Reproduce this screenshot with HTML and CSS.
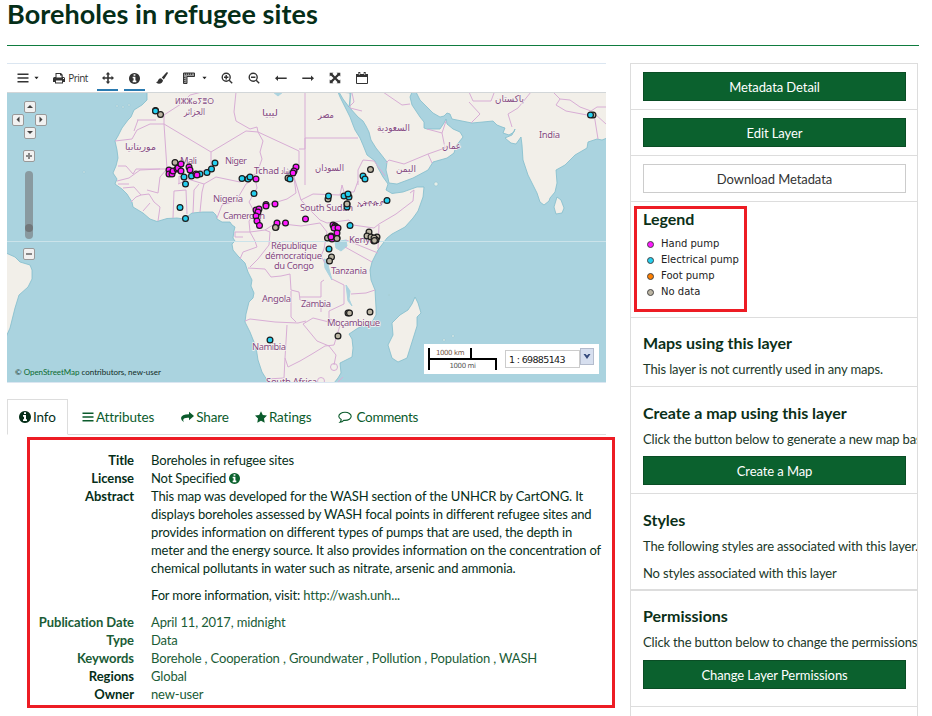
FILE: index.html
```html
<!DOCTYPE html>
<html lang="en">
<head>
<meta charset="utf-8">
<title>Boreholes in refugee sites</title>
<link rel="stylesheet" href="styles.css">
</head>
<body>
<svg width="0" height="0" class="sprite" aria-hidden="true">
  <symbol id="i-info" viewBox="0 128 1536 1536"><path d="M1024 1376v-160q0-14-9-23t-23-9h-96v-512q0-14-9-23t-23-9h-320q-14 0-23 9t-9 23v160q0 14 9 23t23 9h96v320h-96q-14 0-23 9t-9 23v160q0 14 9 23t23 9h448q14 0 23-9t9-23zm-128-896v-160q0-14-9-23t-23-9h-192q-14 0-23 9t-9 23v160q0 14 9 23t23 9h192q14 0 23-9t9-23zm640 416q0 209-103 385.500t-279.500 279.500-385.500 103-385.500-103-279.500-279.500-103-385.500 103-385.500 279.500-279.500 385.500-103 385.500 103 279.500 279.500 103 385.500z"/></symbol>
  <symbol id="i-bars" viewBox="0 0 12 12"><path d="M.5 1.500h11v1.600H.5zM.5 5.200h11v1.600H.5zM.5 8.900h11v1.600H.5z"/></symbol>
  <symbol id="i-caret" viewBox="0 0 6 4"><path d="M.5.500h5L3 3.500z"/></symbol>
</svg>
<h2 class="page-title">Boreholes in refugee sites</h2>
<div class="columns">
  <main class="main">
    <section class="viewer">
      <div class="toolbar">
        <span class="tool wide"><svg class="ic"><use href="#i-bars"/></svg><svg class="caret"><use href="#i-caret"/></svg></span>
        <span class="tool print"><svg class="ic" viewBox="0 0 12 12"><path fill-rule="evenodd" d="M2.500 1h5.500l1.700 1.700V5H10.500Q12 5 12 6.500V10H10v1.500H2V10H0V6.500Q0 5 1.500 5h1zM3.500 2v3.500h5V3.500H7V2zM3 8.500v2h6v-2zM10 6v1h1V6z"/></svg>Print</span>
        <span class="tool on"><svg class="ic" viewBox="0 0 12 12"><path d="M6 0l2.300 2.500H6.800v2.700h2.700V3.700L12 6 9.500 8.300V6.800H6.800v2.700h1.500L6 12 3.700 9.500h1.500V6.800H2.500v1.500L0 6l2.500-2.300v1.500h2.700V2.500H3.700z"/></svg></span>
        <span class="tool on"><svg class="ic info"><use href="#i-info"/></svg></span>
        <span class="tool"><svg class="ic" viewBox="0 0 12 12"><path d="M10.600.300Q11.800-.2 12 1L7.800 7.500 5.800 5.600zM5 6.200l2 2Q6.500 11.500 3 11.700 1 11.800 0 10q1.500.2 2-1.500Q2.600 6.200 5 6.200z"/></svg></span>
        <span class="tool wide"><svg class="ic" viewBox="0 0 12 12"><path fill="#999" stroke="#333" d="M.5 1h11v3.500H4V11.500H.500z"/><path d="M2.500 1v2M4.500 1v2M6.500 1v2M8.500 1v2M.5 5.500h2M.5 7.500h2M.5 9.500h2" stroke="#333" stroke-width=".8"/></svg><svg class="caret"><use href="#i-caret"/></svg></span>
        <span class="tool"><svg class="ic line" viewBox="0 0 12 12"><circle cx="5.200" cy="5.200" r="4"/><path d="M8.200 8.200l3 3M3 5.200h4.400M5.200 3v4.400"/></svg></span>
        <span class="tool"><svg class="ic line" viewBox="0 0 12 12"><circle cx="5.200" cy="5.200" r="4"/><path d="M8.200 8.200l3 3M3 5.200h4.400"/></svg></span>
        <span class="tool"><svg class="ic" viewBox="0 0 12 12"><path d="M0 6.200l3-2.700v2h8.700v1.400H3v2z"/></svg></span>
        <span class="tool"><svg class="ic" viewBox="0 0 12 12"><path d="M12 6.200L9 3.500v2H.3v1.400H9v2z"/></svg></span>
        <span class="tool"><svg class="ic" viewBox="0 0 12 12"><path d="M.7.700h3.800L3.400 1.800 6 4.500l2.600-2.700L7.500.700h3.800v3.800l-1.100-1.100L7.500 6l2.700 2.600 1.100-1.100v3.800H7.500l1.100-1.100L6 7.500l-2.600 2.700 1.100 1.100H.700V7.500l1.100 1.100L4.500 6 1.800 3.400.7 4.500z"/></svg></span>
        <span class="tool"><svg class="ic" viewBox="0 0 12 12"><path fill="none" stroke="#333" d="M.5 2.500h11v9H.500z"/><path d="M0 2h12v3H0zM2.300 0h2v3.500h-2zM7.700 0h2v3.500h-2z"/><path stroke="#fff" stroke-width=".7" d="M3.300 1v2M8.700 1v2"/></svg></span>
      </div>
      <div class="map">
        <svg class="map-canvas" viewBox="7 93 599 289" width="599" height="289">
          <g class="land">
            <path d="M147 92L147 100 142 105 134 110 131 117 128 120 122 128 118 136 115 141 117 150 118 158 116 166 113 173 117 179 115 184 122 189 127 194 132 202 133 207 143 213 150 219 157 221.500 167 218.500 177 218 184 219 192 213 203 212 213 212 216 215 217 219 222 222 230 222 232 225 235 227 234 231 233 238 235 241 232 244 233 250 238 256 245 263 248 272 252 280 251 286 254 293 253 298 249 302 246 314 245 322 250 332 256 347 258 360 262 372 267 380 267 383H334L338 378 341 373 340 363 352 357 353 348 352 339 349 334 358 328 372 322 376 315 376 308 375 290 371 280 370 270 372 262 378 250 387 238 392 234 405 227 413 218 418 211 423 197 424 187 417 187 403 192 392 193.500 386 190 388 184 383 177 378 168 375 161 367 155 363 145 360 138 355 130 353 125 350 117 345 107 340 97 338 92z"/>
            <path d="M339 92L343 99 349 107 351 93zM350 92L350 108 358 117 363 121 366 126 369 132 371 140 376 148 380 153 387 162 386 170 388 178 389 183 397 184 413 178 428 170 433 162 447 158 454 153 456 146 463 137 460 132 453 129 447 124 446 119 444 123 440 129 427 129 424 128 424 122 420 117 412 105 410 97 412 92z"/>
            <path d="M416 92L420 100 427 107 433 113 440 117 444 116 447 113 450 114 452 119 472 123 493 121 497 125 502 127 505 128 503 133 509 135 514 132 515 129 512 135 505 138 511 143 516 144 521 137 522 145 523 160 528 175 537 193 540 202 544 205 549 201 550 198 555 192 557 183 556 170 565 165 575 155 587 148 588 142 597 139 602 140 607 138V92z"/>
            <path d="M557 197L561 200 564 208 562 213 556 214 554 207z"/>
            <path d="M415 297L418 303 421 313 417 317 417 326 412 342 407 358 398 362 392 358 388 345 393 335 392 323 400 315 408 310 412 304z"/>
            <path d="M6 253L15 257 20 262 30 265 32 270 32 279 28 287 19 295 15 308 10 328 6 337z"/>
            <g class="isle"><circle cx="117" cy="106" r="1"/><circle cx="123" cy="107" r="1"/><circle cx="129" cy="105" r="1"/><circle cx="84" cy="172" r="1"/><circle cx="436" cy="184" r="2"/><circle cx="444" cy="340" r="1.200"/><circle cx="453" cy="336" r="1.200"/><circle cx="389" cy="295" r=".7"/></g>
          </g>
          <g class="lake"><path d="M335 242L346 240 347 246 341 251 336 248z"/><path d="M324 259L325 268 332 280 329 269 327 260z"/><path d="M346 285L350 291 349 299 352 306 348 301z"/><path d="M273 92l5 4 5-4z"/></g>
          <g class="border">
            <path d="M202 92L190 95 181 104 164 115 164 124 150 124 137 130 132 139 115 141M137 120H156M138 120L134 131"/>
            <path d="M164 124L211 152 246 131 258 132 257 127 250 129 236 121 234 112 236 92M211 152V168L199 172 189 173 183 182 178 184M164 124L167 169H136L133 174 126 166 118 166M167 169L160 177 158 193 147 190"/>
            <path d="M117 181L129 178M118 184L129 184M129 178L140 170 160 169M123 188L134 187 141 195 136 197 131 202M141 195L149 194 154 202 160 207 158 221M150 203L143 211"/>
            <path d="M179 184L179 176 191 180 204 184 202 192 200 212M173 218L174 191 186 190 187 214M193 213L194 190 199 184M204 184L216 177 240 182 257 173 262 159 260 152 263 141 258 132L299 151V168L294 177 296 193 287 199 264 206 255 211"/>
            <path d="M299 149H305V93M305 138L358 138M305 138V185M217 218L222 205 236 201 246 184 255 178 257 188 249 202 255 213 249 221 250 232 235 232M294 177L301 200 313 194 340 195 342 185 344 192M301 200L311 211 320 220 327 223 349 220 353 225 374 228 379 224 396 214 413 201 414 190 410 193M358 185V170L363 160 374 161 385 176M344 192L354 192 358 181"/>
            <path d="M235 232L235 237 243 237M250 232L255 241 257 247 243 252 240 259M250 232L265 230 276 223 292 225 301 226 320 223M265 230L270 232 269 245 258 259 250 267M248 268L265 269 271 277 281 276 290 274 291 290 299 292 300 300 312 302 321 305 321 312M291 301V317L296 322M245 321L250 319 275 322 298 323 306 321M291 301V291"/>
            <path d="M320 223L327 232 324 249 321 256 325 263M346 240L378 253M379 225L378 249M345 247L372 262M332 279L344 285 344 304 329 311 329 322 313 318 303 324 317 341 329 346 336 355 334 365M324 280L321 282V297L300 297M351 294L366 293 375 290M287 325L285 358 288 367 300 361 312 354 325 346 334 345 341 322 329 319M285 358L284 378 267 379M343 377L338 382"/><circle cx="334" cy="367" r="3.500"/><circle cx="321" cy="381" r="3.500"/>
            <path d="M349 107L354 102 352 93M350 108L362 111M386 163L389 160 404 164 428 154 445 148 442 133 427 129M442 133L446 121M383 92L402 105 410 104M428 154L432 163M469 92L473 101 491 101 494 93M469 102L480 114 471 123M531 92L518 108 508 114 512 127M553 92L560 99 570 100 580 107 591 111 597 107 606 107M560 99L556 105 566 111 587 115 595 114 606 124M594 114L598 139"/>
          </g>
          <path class="equator" d="M7 241.500H606"/>
          <g class="label native">
            <text class="small" x="175" y="104" textLength="39" lengthAdjust="spacingAndGlyphs">ⵍⵣⵣⴰⵢⴻⵔ</text><text x="184" y="114.500" textLength="21" lengthAdjust="spacingAndGlyphs">الجزائر</text><text x="262" y="115.500" textLength="16" lengthAdjust="spacingAndGlyphs">ليبيا</text><text x="318" y="118" textLength="16" lengthAdjust="spacingAndGlyphs">مصر</text><text x="377" y="131" textLength="33" lengthAdjust="spacingAndGlyphs">السعودية</text><text x="442" y="149" textLength="19" lengthAdjust="spacingAndGlyphs">عمان</text><text x="495" y="101.500" textLength="29" lengthAdjust="spacingAndGlyphs">پاکستان</text><text x="125" y="150" textLength="31" lengthAdjust="spacingAndGlyphs">موريتانيا</text><text x="315" y="171" textLength="29" lengthAdjust="spacingAndGlyphs">السودان</text><text x="396" y="172" textLength="20" lengthAdjust="spacingAndGlyphs">اليمن</text><text class="small" x="357" y="205.500" textLength="27" lengthAdjust="spacingAndGlyphs">ኢትዮጵያ</text><text x="281" y="174" textLength="9" lengthAdjust="spacingAndGlyphs">شاد</text>
          </g>
          <g class="label">
            <text x="180" y="164" textLength="17">Mali</text><text x="225" y="164" textLength="22">Niger</text><text x="254" y="174" textLength="25">Tchad</text><text x="213" y="202" textLength="30">Nigeria</text><text x="223" y="219" textLength="42">Cameroon</text><text x="300" y="211" textLength="53">South Sudan</text><text x="349" y="243" textLength="26">Kenya</text><text x="539" y="138" textLength="21">India</text><text x="271" y="248.500" textLength="46">République</text><text x="265" y="258.500" textLength="57">démocratique</text><text x="274" y="268.500" textLength="40">du Congo</text><text x="331" y="274" textLength="36">Tanzania</text><text x="262" y="302" textLength="29">Angola</text><text x="301" y="307" textLength="30">Zambia</text><text x="327" y="326" textLength="53">Moçambique</text><text x="252" y="349.500" textLength="34">Namibia</text><text x="266" y="384.500" textLength="51">South Africa</text>
          </g>
          <g id="markers"></g>
        </svg>
        <div class="pan"><b class="pb n"><i></i></b><b class="pb w"><i></i></b><b class="pb e"><i></i></b><b class="pb s"><i></i></b></div>
        <div class="zoomer"><b class="pb plus"></b><div class="track"><span></span></div><b class="pb"></b></div>
        <div class="attribution">© <span>OpenStreetMap</span> contributors, new-user</div>
        <div class="scale">
          <div class="bars"><span class="km">1000 km</span><span class="mi">1000 mi</span></div>
          <div class="ratio">1 : 69885143</div><div class="drop"><svg viewBox="0 0 12 12" width="12" height="12"><path d="M2.500 3h2L6 4.500 7.500 3h2L6 8z" fill="#354a7c"/></svg></div>
        </div>
      </div>
    </section>
    <nav class="tabs">
      <a class="tab active"><svg class="ti"><use href="#i-info"/></svg><span>Info</span></a>
      <a class="tab t2"><svg class="ti"><use href="#i-bars"/></svg><span>Attributes</span></a>
      <a class="tab t3"><svg class="ti share" viewBox="0 0 13 12"><path d="M8 .8L13 5 8 9.300V6.800Q3 6.300 2.300 8.500 2 9.500 2.800 11.300 0 9.500 0 7 .3 3.200 8 3.200z"/></svg><span>Share</span></a>
      <a class="tab t4"><svg class="ti star" viewBox="0 0 12 12"><path d="M6 .3L7.800 4 12 4.600 9 7.500l.7 4.200L6 9.700l-3.700 2L3 7.500 0 4.600 4.200 4z"/></svg><span>Ratings</span></a>
      <a class="tab t5"><svg class="ti talk" viewBox="0 0 14 12"><path d="M7 1.200c3.500 0 6.200 1.900 6.200 4.100S10.500 9.400 7 9.400l-1.300-.1Q4.200 11 2 11.300q1-1 1.200-2.700Q.8 7.300.8 5.300C.8 3.100 3.500 1.200 7 1.200z"/></svg><span>Comments</span></a>
    </nav>
    <dl class="details">
      <dt>Title</dt><dd>Boreholes in refugee sites</dd>
      <dt>License</dt><dd>Not Specified <svg class="mini"><use href="#i-info"/></svg></dd>
      <dt>Abstract</dt><dd class="abstract"><p>This map was developed for the WASH section of the UNHCR by CartONG. It<br>displays boreholes assessed by WASH focal points in different refugee sites and<br>provides information on different types of pumps that are used, the depth in<br>meter and the energy source. It also provides information on the concentration of<br>chemical pollutants in water such as nitrate, arsenic and ammonia.</p><p>For more information, visit: <a>http://wash.unh...</a></p></dd>
      <dt class="lnk">Publication Date</dt><dd class="lnk">April 11, 2017, midnight</dd>
      <dt class="lnk">Type</dt><dd class="lnk">Data</dd>
      <dt class="lnk">Keywords</dt><dd class="lnk">Borehole , Cooperation , Groundwater , Pollution , Population , WASH</dd>
      <dt>Regions</dt><dd class="lnk">Global</dd>
      <dt>Owner</dt><dd class="lnk">new-user</dd>
    </dl>
    <div class="mark mark-details"></div>
  </main>
  <aside class="side">
    <section class="cell"><a class="btn">Metadata Detail</a></section>
    <section class="cell"><a class="btn">Edit Layer</a></section>
    <section class="cell"><a class="btn plain">Download Metadata</a></section>
    <section class="cell legend">
      <h4>Legend</h4>
      <ul><li><i class="dot hand"></i>Hand pump</li><li><i class="dot elec"></i>Electrical pump</li><li><i class="dot foot"></i>Foot pump</li><li><i class="dot none"></i>No data</li></ul>
      <div class="mark mark-legend"></div>
    </section>
    <section class="cell maps"><h4>Maps using this layer</h4><p>This layer is not currently used in any maps.</p></section>
    <section class="cell create"><h4>Create a map using this layer</h4><p>Click the button below to generate a new map based on this layer.</p><a class="btn">Create a Map</a></section>
    <section class="cell styles"><h4>Styles</h4><p>The following styles are associated with this layer.</p><p class="second">No styles associated with this layer</p></section>
    <section class="cell perms"><h4>Permissions</h4><p>Click the button below to change the permissions of this layer.</p><a class="btn">Change Layer Permissions</a></section>
    <section class="cell rest"></section>
  </aside>
</div>
<script src="markers.js"></script>
</body>
</html>
```
FILE: styles.css
```css
* { box-sizing: border-box; }
html, body { height: 716px; overflow: hidden; }
body { margin: 0; padding: 0 13px 0 7px; background: #fff; color: #0b3018; font: 13px/18px Lato, "Liberation Sans", sans-serif; }
.sprite { position: absolute; }
.page-title { margin: 0; height: 46px; border-bottom: 1px solid #0f7c3f; font-size: 27px; line-height: 28px; font-weight: 700; color: #052e18; white-space: nowrap; letter-spacing: .06px; }
.columns { display: flex; gap: 24px; padding-top: 17px; }
.main { width: 599px; flex: none; position: relative; }
.viewer { border-top: 1px solid #dbe6f1; border-bottom: 1px solid #dbe6f1; height: 320px; }
.toolbar { display: flex; gap: 6px; height: 29px; padding-left: 5px; border-bottom: 1px solid #d2d6d8; font: 10px/28px "Open Sans", sans-serif; color: #333; letter-spacing: -.6px; }
.tool { display: flex; align-items: center; justify-content: center; width: 21px; height: 27px; padding-top: 3px; border-bottom: 2px solid transparent; }
.tool.on { border-color: #2a7ab0; }
.tool.wide { width: 32px; padding-left: 1px; gap: 7px; }
.tool.wide:first-child { width: 31px; padding-left: 0; gap: 5px; }
.tool.print { width: 42px; gap: 3px; padding-left: 1px; }
.ic { width: 12px; height: 12px; fill: #333; flex: none; }
.ic.info { width: 11px; height: 11px; }
.ic.line { fill: none; stroke: #333; stroke-width: 1.400; }
.caret { width: 5px; height: 4px; fill: #222; flex: none; }
.map { position: relative; height: 289px; overflow: hidden; background: #aad3df; }
.map-canvas { display: block; }
.land { fill: #f2efe9; stroke: #82bccb; stroke-width: .8; stroke-linejoin: round; }
.isle { fill: #e5eee9; stroke-width: .4; }
.lake { fill: #aad3df; stroke: #aad3df; }
.border { fill: none; stroke: #d8add5; stroke-width: 1; stroke-linejoin: round; }
.equator { stroke: #cbe3ea; stroke-width: 1; }
.label { font: 9.500px "Noto Sans", "DejaVu Sans", sans-serif; fill: #854a82; stroke: #f6f3f0; stroke-width: 1.400; paint-order: stroke; }
.native { font-family: "DejaVu Sans", "Noto Sans", sans-serif; }
.label .small { font-size: 8px; }
.pb { display: block; position: relative; width: 12px; height: 12px; border: 1px solid #999; border-radius: 2px; background: #f1f1f1; }
.pan { position: absolute; left: 5px; top: 8px; width: 35px; display: grid; grid-template-columns: 12px 12px; column-gap: 11px; row-gap: 1px; }
.pan .n, .pan .s { grid-column: 1 / 3; justify-self: center; }
.pb i { position: absolute; left: 2px; top: 3px; border: 3px solid transparent; border-top: 0; border-bottom-color: #444; }
.pb.s i { transform: rotate(180deg); }
.pb.w i { transform: rotate(-90deg); }
.pb.e i { transform: rotate(90deg); }
.zoomer { position: absolute; left: 16px; top: 57px; width: 12px; }
.zoomer .pb::before, .plus::after { content: ""; position: absolute; left: 2px; top: 4px; width: 6px; height: 2px; background: #888; }
.plus::after { transform: rotate(90deg); }
.track { width: 8px; height: 68px; margin: 9px 2px; border-radius: 4px; background: #899aa0; padding-top: 53px; }
.track span { display: block; width: 8px; height: 8px; border-radius: 50%; background: #71777a; }
.attribution { position: absolute; left: 8px; bottom: 3px; font-size: 8px; line-height: 14px; color: #102c25; white-space: nowrap; letter-spacing: -.03px; }
.attribution span { color: #0b6b30; }
.scale { position: absolute; left: 417px; top: 251px; width: 175px; height: 30px; background: #fff; display: flex; }
.bars { width: 69px; height: 22px; margin: 4px 0 0 4px; font: 7px/10px "DejaVu Sans", sans-serif; color: #555; }
.bars span { display: block; text-align: center; letter-spacing: -.4px; }
.km { width: 44px; height: 10px; border-left: 2px solid #000; border-right: 2px solid #000; color: #765648; }
.bars .mi { width: 69px; height: 12px; border: solid #000; border-width: 2px 2px 0; line-height: 12px; }
.ratio { width: 75px; height: 18px; margin: 6px 0 0 8px; padding-left: 3px; border: 1px solid #ccc; font: 9.500px/17px "DejaVu Sans", sans-serif; color: #171717; letter-spacing: -.65px; white-space: nowrap; }
.drop { width: 14px; height: 17px; margin-top: 4px; background: #d7dfef; border: 1px solid #b4bccd; }
.tabs { display: flex; height: 36px; margin-top: 16px; border-bottom: 1px solid #ddd; font-size: 13.500px; line-height: 35px; letter-spacing: -.12px; }
.tab { display: flex; align-items: center; gap: 2px; height: 36px; color: #0b5b2c; white-space: nowrap; }
.tab.active { width: 61px; padding-left: 11px; border: 1px solid #ddd; border-bottom-color: #fff; background: #fff; color: #052e18; }
.ti { width: 12px; height: 12px; fill: currentColor; flex: none; }
.t2 { margin-left: 14px; } .t3 { margin-left: 27px; } .t4 { margin-left: 26px; } .t5 { margin-left: 26px; gap: 5px; }
.t5 { letter-spacing: -.3px; }
.share { width: 13px; }
.talk { width: 14px; fill: none; stroke: currentColor; stroke-width: 1.100; }
.details { display: grid; grid-template-columns: 127px 460px; column-gap: 17px; margin: 16px 0 0; white-space: nowrap; color: #052e18; letter-spacing: -.15px; }
.details dt { text-align: right; font-weight: 700; letter-spacing: -.06px; }
.details dd { margin: 0; }
.details p { margin: 0 0 9px; }
.details .lnk, .details a { color: #1a5c36; }
.mini { width: 11px; height: 11px; fill: #0b622e; vertical-align: -1px; }
.mark { position: absolute; border: 3px solid #ed1c24; pointer-events: none; }
.mark-details { left: 20px; top: 374px; width: 588px; height: 271px; }
.mark-legend { left: 3px; top: 4px; width: 113px; height: 106px; }
.side { width: 288px; height: 660px; flex: none; border: 1px solid #ddd; overflow: hidden; }
.cell { position: relative; height: 46px; padding: 8px 0 0 12px; border-bottom: 1px solid #ddd; overflow: hidden; white-space: nowrap; color: #1a3828; letter-spacing: -.15px; }
.btn { display: block; width: 263px; height: 29px; border: 1px solid #0a4d25; background: #0b612e; color: #fff; font-size: 13px; line-height: 28px; text-align: center; letter-spacing: -.08px; }
.btn.plain { background: #fff; border-color: #ccc; color: #333; }
.cell h4 { margin: -1px 0 0; font-size: 16px; line-height: 20px; font-weight: 700; color: #0b3018; letter-spacing: 0; }
.cell p { margin: 7px 0 0; }
.legend { height: 116px; }
.legend ul { list-style: none; margin: 7px 0 0; padding: 0 0 0 4px; font: 10px/16px "DejaVu Sans", sans-serif; letter-spacing: 0; color: #222; }
.legend li { display: flex; align-items: center; gap: 7px; }
.dot { width: 7px; height: 7px; border: 1px solid #444; border-radius: 50%; }
.hand { background: #ff19ff; } .elec { background: #24cfef; } .foot { background: #ff7f00; } .none { background: #bcb5a3; }
.maps { height: 69px; padding-top: 16px; }
.create { height: 107px; padding-top: 17px; }
.create .btn { margin-top: 8px; }
.perms .btn { margin-top: 9px; }
.styles { height: 97px; padding-top: 17px; border-bottom-width: 2px; }
.styles .second { margin-top: 9px; }
.perms { height: 116px; padding-top: 16px; }
.rest { border: 0; }
```
FILE: markers.js
```javascript
// Borehole positions on the map canvas, grouped by pump type in draw order.
const groups = [
  ['#bcb5a3', [[155.500,110.500],[160.500,114.500],[175,162.500],[276,227],[370.500,169.500],[288,178],[328,199],[347,204],[327.500,238],[337,238],[331.500,257],[329.500,261],[369,232],[367,236],[371,237],[374,241],[377,237],[376,240],[374,238],[348,313],[349.500,313],[370,312],[338,336],[593,115]]],
  ['#24cfef', [[155.500,111],[184,177],[185.500,184],[191.500,176],[200,174],[207,172.500],[211.500,169],[215,163],[180,207.500],[185.500,218.500],[242,178.500],[248,179],[250,177],[254,193.500],[290,179],[328.500,196],[344,196],[349,197],[348,194],[347,207],[363,176],[365,179],[387,200.500],[350,225.500],[329,249],[270,340],[590.500,115]]],
  ['#ff19ff', [[169,170],[169,174],[172,174],[173,171],[177,169],[178,168],[181,164],[181,171],[189,167],[190,170],[196,174],[197,175],[256,179],[296,167],[294,171],[293,173],[266,204.500],[266,206],[275,204],[256,210],[259,209],[258,212],[256,216],[257,221],[259.500,225.500],[305.500,219],[277,223],[285.500,223],[333,225],[335,226],[336,227],[334,228],[338,228],[337,233],[331,236],[332,239],[331,237]]],
  ['#bcb5a3', [[275.500,227.500],[347,204],[337,238.500],[374.500,240.500]]]
];
const layer = document.getElementById('markers');
for (const [fill, points] of groups) {
  for (const [x, y] of points) {
    const c = document.createElementNS('http://www.w3.org/2000/svg', 'circle');
    c.setAttribute('cx', x);
    c.setAttribute('cy', y);
    c.setAttribute('r', 2.9);
    c.setAttribute('fill', fill);
    c.setAttribute('stroke', '#1c1c1c');
    c.setAttribute('stroke-width', 1.2);
    layer.appendChild(c);
  }
}
```
